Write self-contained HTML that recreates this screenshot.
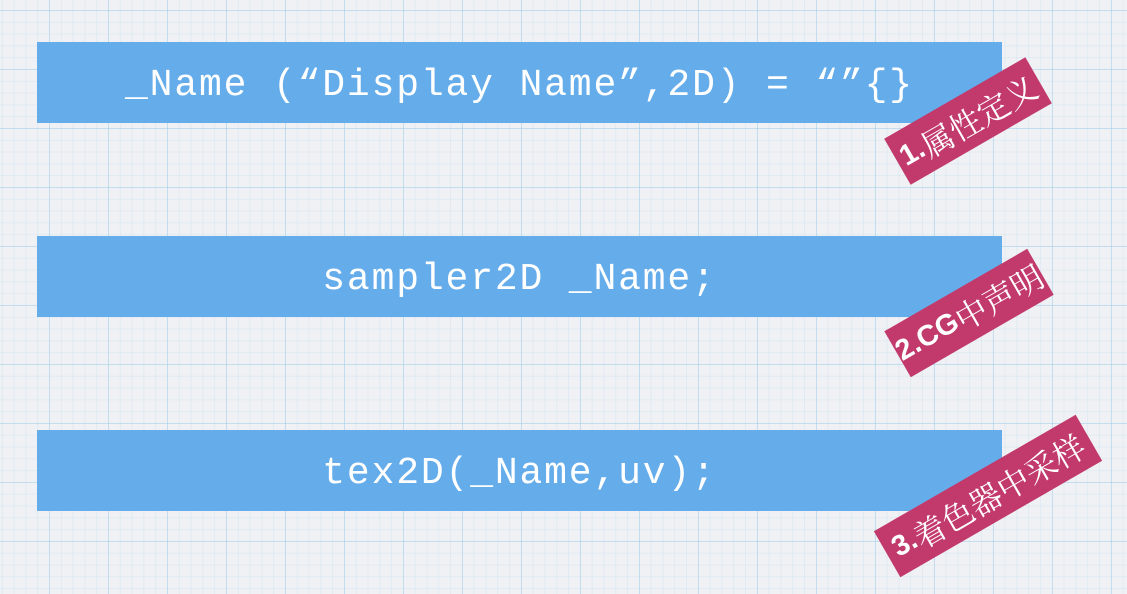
<!DOCTYPE html>
<html><head><meta charset="utf-8"><style>
html,body{margin:0;padding:0}
body{width:1127px;height:594px;overflow:hidden;position:relative;background-color:#f0f1f4;
background-image:
linear-gradient(90deg,rgba(150,200,232,.4) 1px,transparent 1px),
linear-gradient(0deg,rgba(150,200,232,.4) 1px,transparent 1px),
linear-gradient(90deg,rgba(180,215,238,.25) 1px,transparent 1px),
linear-gradient(0deg,rgba(180,215,238,.25) 1px,transparent 1px);
background-size:59px 59px,59px 59px,11.8px 11.8px,11.8px 11.8px;
background-position:49px 11px,49px 11px,49px 11px,49px 11px;}
.bar{position:absolute;left:37px;width:965px;height:81px;background:#65acea;color:#fff;
font-family:"Liberation Mono",monospace;font-size:38px;letter-spacing:1.85px;display:flex;align-items:center;justify-content:center;white-space:pre;padding-top:6px;box-sizing:border-box}
.tag{position:absolute;background:#c23a6b;color:#fff;height:53px;display:flex;align-items:center;justify-content:center;
font-family:"Liberation Serif","Noto Serif CJK SC",serif;font-size:32px;transform:translate(-50%,-50%) rotate(-30deg);white-space:nowrap}
.tag b{font-family:"Liberation Sans",sans-serif;font-weight:900;font-size:29px}
</style></head><body>
<div class="bar" style="top:42px">_Name (“Display Name”,2D) = “”{}</div>
<div class="bar" style="top:236px">sampler2D _Name;</div>
<div class="bar" style="top:430px">tex2D(_Name,uv);</div>
<div class="tag" style="left:968px;top:121px;width:163px"><b>1.</b>属性定义</div>
<div class="tag" style="left:969px;top:313px;width:165px"><b>2.CG</b>中声明</div>
<div class="tag" style="left:988px;top:496px;width:233px"><b>3.</b>着色器中采样</div>
</body></html>
